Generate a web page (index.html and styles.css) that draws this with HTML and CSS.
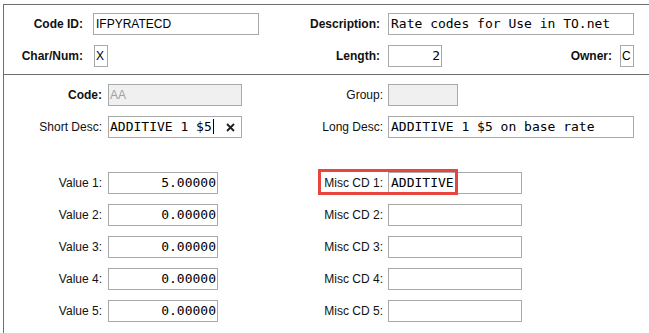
FILE: index.html
```html
<!doctype html>
<html lang="en">
<head>
<meta charset="UTF-8">
<title>Code Maintenance</title>
<link rel="stylesheet" href="styles.css">
</head>
<body>
	<div class="panel">
		<!-- header: code id / description -->
		<div class="head">
			<label class="lbl b">Code ID:</label>
			<div class="fld w166 sans">IFPYRATECD</div>
			<label class="lbl b">Description:</label>
			<div class="fld w246">Rate codes for Use in TO.net</div>

			<label class="lbl b">Char/Num:</label>
			<div><div class="fld w14 nudge sans">X</div></div>
			<label class="lbl b">Length:</label>
			<div class="pair">
				<div class="fld w54 num">2</div>
				<span class="owner">
					<label class="b">Owner:</label>
					<div class="fld w14 sans">C</div>
				</span>
			</div>
		</div>

		<!-- detail -->
		<div class="detail">
			<div class="grid">
				<label class="lbl b">Code:</label>
				<div class="fld w134 off">AA</div>
				<label class="lbl">Group:</label>
				<div class="fld w70 off"></div>

				<label class="lbl">Short Desc:</label>
				<div class="fld w134 edit">ADDITIVE 1 $5<span class="caret"></span>
					<svg class="clear" width="9" height="9" viewBox="0 0 9 9"><path d="M1 1L8 8M8 1L1 8" stroke="#1e1e1e" stroke-width="1.8"/></svg>
				</div>
				<label class="lbl">Long Desc:</label>
				<div class="fld w246">ADDITIVE 1 $5 on base rate</div>
			</div>

			<div class="grid values">
				<label class="lbl">Value 1:</label>
				<div class="fld w110 num">5.00000</div>
				<label class="lbl">Misc CD 1:</label>
				<div class="fld w134">ADDITIVE</div>

				<label class="lbl">Value 2:</label>
				<div class="fld w110 num">0.00000</div>
				<label class="lbl">Misc CD 2:</label>
				<div class="fld w134"></div>

				<label class="lbl">Value 3:</label>
				<div class="fld w110 num">0.00000</div>
				<label class="lbl">Misc CD 3:</label>
				<div class="fld w134"></div>

				<label class="lbl">Value 4:</label>
				<div class="fld w110 num">0.00000</div>
				<label class="lbl">Misc CD 4:</label>
				<div class="fld w134"></div>

				<label class="lbl">Value 5:</label>
				<div class="fld w110 num">0.00000</div>
				<label class="lbl">Misc CD 5:</label>
				<div class="fld w134"></div>

				<!-- highlight box drawn over misc cd 1 -->
				<div class="mark"></div>
			</div>
		</div>
	</div>
</body>
</html>
```

FILE: styles.css
```css
body{
	margin:0;
	font-family:"Liberation Sans", Arial, sans-serif;
	font-size:12px;
	color:#111;
	background:#fff;
}
.panel{
	margin:4px 0 0 3px;
	border-top:1px solid #6e6e6e;
	border-left:1px solid #6e6e6e;
	height:calc(100vh - 5px);
}
.head{
	display:grid;
	grid-template-columns:89px 166px 129px 246px;
	row-gap:10px;
	padding:8px 0 7px 0;
	border-bottom:1px solid #6e6e6e;
}
.head .lbl:nth-child(4n+1){ padding-right:10px; }
.head .lbl{ padding-right:8px; }
.lbl{
	text-align:right;
	line-height:22px;
	white-space:nowrap;
}
.b{ font-weight:bold; }
.fld{
	box-sizing:border-box;
	height:22px;
	border:1px solid #a9a9a9;
	background:#fff;
	font-family:"DejaVu Sans Mono", monospace;
	font-size:13px;
	line-height:20px;
	padding:0 2px;
	color:#000;
	white-space:nowrap;
	overflow:hidden;
}
.sans{
	font-family:"Liberation Sans", Arial, sans-serif;
	font-size:12px;
	padding:0 2px;
}
.w14{ width:14px; padding:0 1px; }
.w54{ width:54px; }
.w70{ width:70px; }
.w110{ width:110px; }
.w134{ width:134px; }
.w166{ width:166px; }
.w246{ width:246px; }
.nudge{ margin-left:1px; }
.num{ text-align:right; padding-right:1px; }
.pair{
	display:flex;
	align-items:center;
	justify-content:space-between;
}
.owner{
	display:flex;
	align-items:center;
	gap:8px;
}
.detail{
	padding-top:9px;
}
.grid{
	display:grid;
	grid-template-columns:104px 134px 146px 246px;
	row-gap:10px;
	align-items:start;
}
.grid .lbl{ padding-right:6px; }
.grid .lbl:nth-child(4n+3){ padding-right:5px; }
.values{
	margin-top:34px;
	position:relative;
}
.off{
	background:#f0f0f0;
	color:#a0a0a0;
	font-family:"Liberation Sans", Arial, sans-serif;
	font-size:12px;
	padding:0 1px;
}
.edit{
	position:relative;
	padding:0 1px;
}
.caret{
	display:inline-block;
	width:1px;
	height:15px;
	background:#000;
	vertical-align:-3px;
	margin-left:1px;
}
.clear{
	position:absolute;
	right:6px;
	top:6px;
}
.mark{
	position:absolute;
	left:314px;
	top:-3px;
	width:140px;
	height:26px;
	box-sizing:border-box;
	border:3px solid #e8453e;
	pointer-events:none;
}
```
